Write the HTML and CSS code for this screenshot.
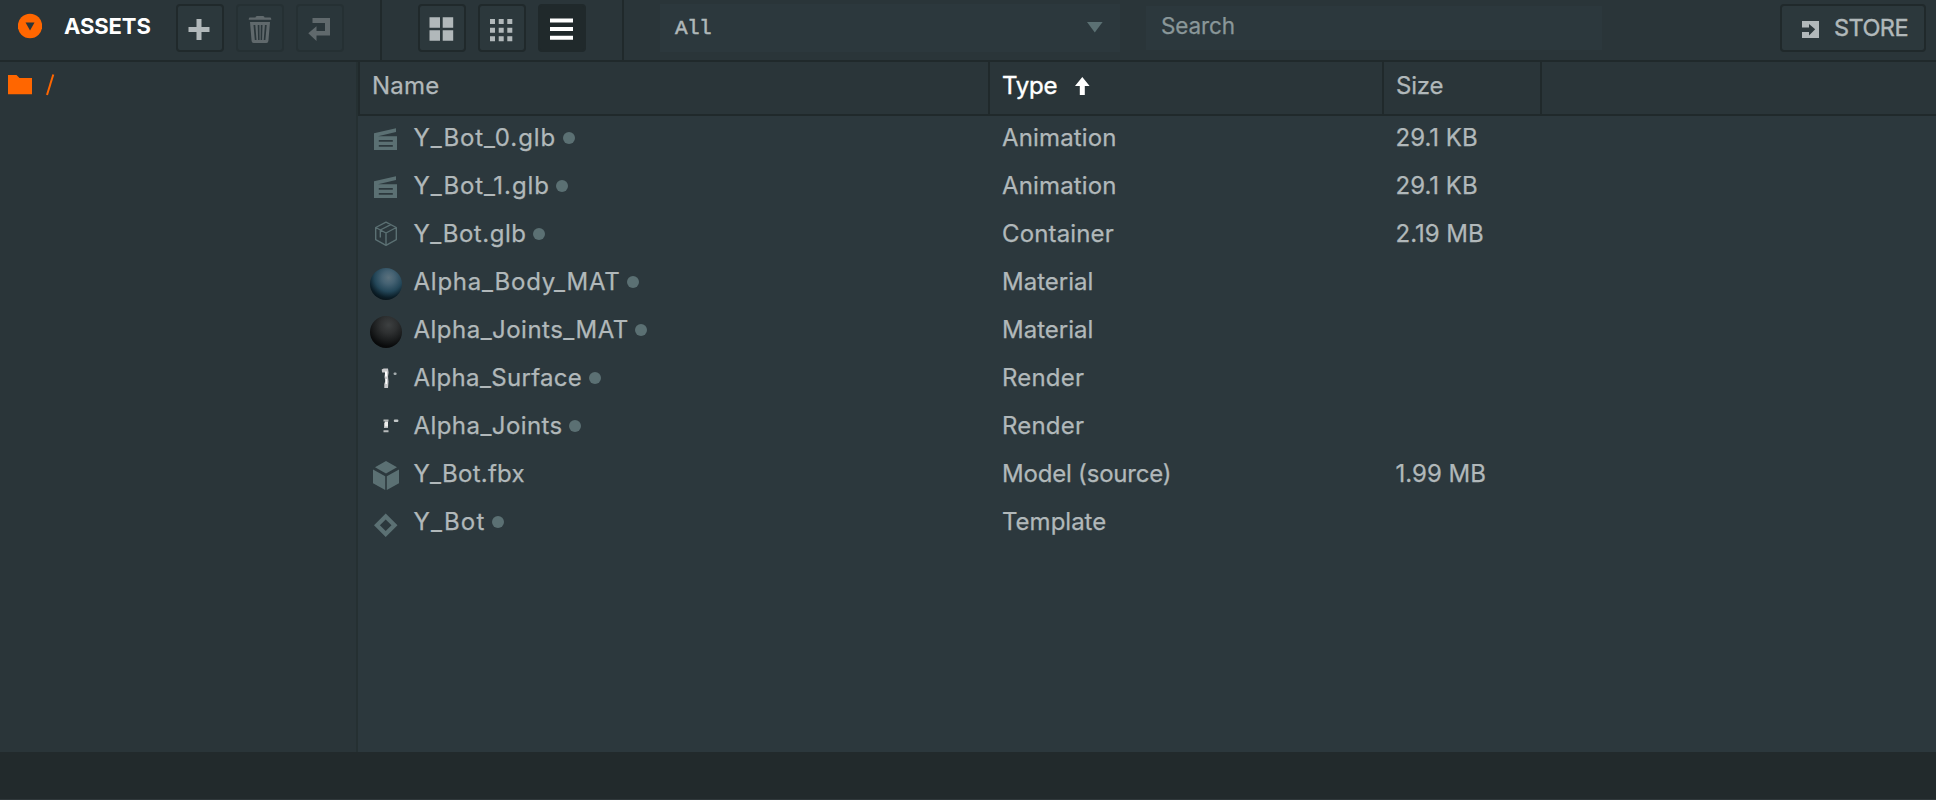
FILE: index.html
```html
<!DOCTYPE html>
<html lang="en">
<head>
<meta charset="utf-8">
<title>Assets</title>
<link rel="stylesheet" href="styles.css">
</head>
<body>
<div class="app">
  <header class="toolbar">
    <div class="tools">
      <svg class="toggle" width="24" height="26" viewBox="0 0 24 26"><circle cx="12" cy="13" r="12.2" fill="#ff6600"/><path d="M7.500 9.600h9L12 17.600z" fill="#2a3539"/></svg>
      <h1 class="title">ASSETS</h1>
      <button class="btn" aria-label="Add"><svg width="44" height="44" viewBox="0 0 44 44"><path d="M18.500 13h5v8h8v5h-8v8h-5v-8h-8v-5h8z" fill="#b1b8ba"/></svg></button>
      <button class="btn disabled" aria-label="Delete"><svg width="44" height="44" viewBox="0 0 44 44" fill="#b1b8ba"><path d="M17.500 11.500q0-1.500 1.500-1.500h6q1.500 0 1.500 1.500h6q.8 1 .8 2.300h-22.600q0-1.300.8-2.300z"/><path fill-rule="evenodd" d="M12 16h20l-1.600 19q-.2 2-2 2H15.600q-1.800 0-2-2zM15.500 19l1.300 15h1.700L17.300 19zM19.700 19l.4 15h1.500l-.2-15zM22.800 19l-.2 15h1.500l.4-15zM26.900 19l-1.200 15h1.700l1.300-15z"/></svg></button>
      <button class="btn disabled" aria-label="Move"><svg width="44" height="44" viewBox="0 0 44 44"><path d="M14.500 12H32v17.500H18.500V35L10.300 27.300l8.200-7V25H27v-8H14.500z" fill="#b1b8ba"/></svg></button>
    </div>
    <div class="views">
      <button class="btn" aria-label="Large grid"><svg width="44" height="44" viewBox="0 0 44 44" fill="#b1b8ba"><path d="M9.500 11.300h10.500v10.500H9.500zM22.700 11.300h10.500v10.500H22.700zM9.500 24.300h10.500v10.500H9.500zM22.700 24.300h10.500v10.500H22.700z"/></svg></button>
      <button class="btn" aria-label="Small grid"><svg width="44" height="44" viewBox="0 0 44 44" fill="#b1b8ba"><path d="M10 13h5v5h-5zM18.700 13h5v5h-5zM27.300 13h5v5h-5zM10 21.700h5v5h-5zM18.700 21.700h5v5h-5zM27.300 21.700h5v5h-5zM10 30.300h5v5h-5zM18.700 30.300h5v5h-5zM27.300 30.300h5v5h-5z"/></svg></button>
      <button class="btn active" aria-label="List"><svg width="44" height="44" viewBox="0 0 44 44" fill="#fff"><path d="M10 12.500h23v4H10zM10 21h23v4H10zM10 29.700h23v4H10z"/></svg></button>
    </div>
    <div class="filters">
      <div class="select"><span>All</span><svg width="16" height="12" viewBox="0 0 16 12"><path d="M0 0h15.600L7.800 10.500z" fill="#5b7073"/></svg></div>
      <div class="search">Search</div>
    </div>
    <button class="btn store"><svg width="17" height="17" viewBox="0 0 17 17"><path fill-rule="evenodd" d="M0 0h17v17H0v-6h7v3.500L13.200 8.300 7 3v3.500H0z" fill="#b1b8ba"/></svg><span>STORE</span></button>
  </header>

  <main class="main">
    <nav class="folders">
      <svg width="24" height="20" viewBox="0 0 24 20"><path d="M0 0h8.500l3 3H24v16.300H0z" fill="#ff6600"/></svg>
      <svg class="root" width="9" height="22" viewBox="0 0 9 22"><path d="M1 21L7.300 0.500" stroke="#ff6600" stroke-width="2"/></svg>
    </nav>
    <section class="table">
      <div class="row head">
        <div class="cell n-name">Name</div>
        <div class="cell n-type sorted"><span>Type</span><svg width="15" height="19" viewBox="0 0 15 19"><path d="M7.300 0L14.600 9H9.800v9H4.800V9H0z" fill="#fff"/></svg></div>
        <div class="cell n-size">Size</div>
      </div>
      <div class="list">
        <div class="row"><div class="icon"><svg width="32" height="32"><use href="#clip"/></svg></div><div class="name t1">Y_Bot_0.glb</div><div class="type w1">Animation</div><div class="size">29.1 KB</div></div>
        <div class="row"><div class="icon"><svg width="32" height="32"><use href="#clip"/></svg></div><div class="name t2">Y_Bot_1.glb</div><div class="type w1">Animation</div><div class="size">29.1 KB</div></div>
        <div class="row"><div class="icon"><svg width="32" height="32" viewBox="0 0 32 32"><path d="M16 2.200l10.300 5.300v12.200L16 25.300 5.700 19.700V7.500zM5.700 7.500L16 13l10.300-5.500M16 13v12.300M10.300 17.500V10L20.800 4.700" fill="none" stroke="#5b7073" stroke-width="1.400" stroke-linejoin="round"/></svg></div><div class="name t3">Y_Bot.glb</div><div class="type w1">Container</div><div class="size">2.19 MB</div></div>
        <div class="row"><div class="icon"><div class="ball blue"></div></div><div class="name t4">Alpha_Body_MAT</div><div class="type w2">Material</div></div>
        <div class="row"><div class="icon"><div class="ball black"></div></div><div class="name t5">Alpha_Joints_MAT</div><div class="type w2">Material</div></div>
        <div class="row"><div class="icon"><svg width="32" height="32" viewBox="0 0 32 32"><path d="M11.700 5.500l2-1h4.300l.6 4-.6 4 .5 5-.5 6.500h-3.700v-4l1-3-.8-4 .6-4.500h-3z" fill="#c9c9cb"/><path d="M15 7.500h2v5h-2zM15.500 15h1.500v5h-1.500z" fill="#fff"/><rect x="23.700" y="8.500" width="2.800" height="2.600" rx=".8" fill="#a4abad"/></svg></div><div class="name t6">Alpha_Surface</div><div class="type w3">Render</div></div>
        <div class="row"><div class="icon"><svg width="32" height="32" viewBox="0 0 32 32"><path d="M13.500 7.500h5v2h-5zM14 10.500h4v5.500h-4zM13.500 18.300h5v2h-5z" fill="#b8bbbc"/><path d="M15 9.500h3v5h-3z" fill="#eee"/><rect x="23.800" y="7.500" width="4.600" height="2.400" rx="1" fill="#c4c8c9"/></svg></div><div class="name t7">Alpha_Joints</div><div class="type w3">Render</div></div>
        <div class="row"><div class="icon"><svg width="32" height="32" viewBox="0 0 32 32" fill="#5b7073"><path d="M16 1L27 7.200 16 13.400 5 7.200zM3 9.500l12.200 6.800V30L3 23.200zM29 9.500l-12.200 6.800V30L29 23.200z"/></svg></div><div class="name t8 plain">Y_Bot.fbx</div><div class="type w4">Model (source)</div><div class="size">1.99 MB</div></div>
        <div class="row"><div class="icon"><svg width="32" height="32" viewBox="0 0 32 32"><path fill-rule="evenodd" d="M15.700 5.500L27.500 17.300 15.700 29 4 17.300zM15.700 11.400L9.900 17.300l5.800 5.800 5.800-5.800z" fill="#5b7073"/></svg></div><div class="name t9">Y_Bot</div><div class="type">Template</div></div>
      </div>
    </section>
  </main>
  <footer class="status"></footer>
</div>
<svg class="defs" width="0" height="0"><symbol id="clip" viewBox="0 0 32 32"><path fill-rule="evenodd" d="M4 9.200L26 4.300v3.700L8 12.200h19V26H4zM8.800 16v1.800h14V16zM8.800 21v1.800h14V21z" fill="#5b7073"/></symbol></svg>
</body>
</html>
```
FILE: styles.css
```css
* { box-sizing: border-box; }
body { margin: 0; background: #222a2c; color: #b1b8ba; font: 400 24px/30px Inter, "Liberation Sans", sans-serif; -webkit-text-stroke: 0.25px currentColor; }
svg { display: block; flex: none; }
.defs { display: none; }
.app { display: flex; flex-direction: column; width: 1936px; height: 800px; overflow: hidden; }

.toolbar { display: flex; height: 62px; flex: none; background: #2a3539; border-bottom: 2px solid #20292b; padding-right: 10px; }
.tools { display: flex; width: 382px; border-right: 2px solid #20292b; padding: 4px 0 0 18px; }
.toggle { margin-top: 9px; }
.title { width: 134px; margin: 7px 0 0; padding-left: 22px; font-size: 22px; line-height: 30px; font-weight: 700; letter-spacing: -0.1px; color: #fff; -webkit-text-stroke: 0; }
.btn { display: flex; width: 48px; height: 48px; flex: none; padding: 0; border: 2px solid #20292b; border-radius: 4px; background: #2c383c; color: #b1b8ba; font: inherit; }
.tools .btn + .btn, .views .btn + .btn { margin-left: 12px; }
.disabled { opacity: 0.4; }
.active { background: #20292b; }
.views { display: flex; width: 242px; border-right: 2px solid #20292b; padding: 4px 0 0 36px; }
.filters { display: flex; flex: 1; padding-left: 36px; }
.select { display: flex; justify-content: space-between; width: 460px; height: 48px; margin-top: 4px; padding: 10px 17px 0 15px; background: #2c383d; font: 20px/30px "Liberation Mono", monospace; -webkit-text-stroke: 0.5px #b1b8ba; }
.select span { font-size: 21px; letter-spacing: -0.6px; }
.select svg { margin-top: 8px; }
.search { width: 456px; height: 44px; margin: 6px 0 0 26px; padding: 5px 0 0 15px; background: #2c383d; color: #8a9799; font-size: 22.500px; letter-spacing: -0.1px; }
.store { width: 146px; margin-top: 4px; padding: 7px 0 0 20px; }
.store svg { margin-top: 8px; }
.store span { margin-left: 15px; font-size: 23.500px; letter-spacing: -0.55px; -webkit-text-stroke: 0.4px #b1b8ba; }

.main { display: flex; height: 690px; flex: none; }
.folders { display: flex; width: 358px; padding: 13px 0 0 8px; background: #2a3539; border-right: 2px solid #253032; }
.root { margin: -1px 0 0 14px; }
.table { display: flex; flex-direction: column; flex: 1; background: #2c383d; }
.row { display: flex; height: 48px; }
.head { height: 54px; flex: none; background: #2a3539; border-bottom: 2px solid #20292b; border-left: 2px solid #20292b; }
.cell { padding: 9px 0 0 12px; border-right: 2px solid #20292b; }
.n-name { width: 630px; letter-spacing: 0.2px; }
.n-type { display: flex; width: 394px; color: #fff; letter-spacing: -0.2px; -webkit-text-stroke: 0.4px #fff; }
.n-type svg { margin: 6px 0 0 18px; }
.n-size { width: 158px; letter-spacing: -0.2px; }
.icon { display: flex; align-items: center; width: 55.500px; padding-left: 12px; }
.name, .type, .size { padding-top: 7px; white-space: nowrap; }
.name { display: flex; width: 588.500px; }
.name::after { content: ""; width: 12px; height: 12px; margin: 9px 0 0 6.500px; border-radius: 50%; background: #5b7073; }
.plain::after { display: none; }
.type { width: 393.500px; }
.t1 { letter-spacing: 0.92px; }
.t2 { letter-spacing: 0.92px; }
.t3 { letter-spacing: 0.55px; }
.t4 { letter-spacing: 0.76px; }
.t5 { letter-spacing: 0.48px; }
.t6 { letter-spacing: 0.33px; }
.t7 { letter-spacing: 0.43px; }
.t8 { letter-spacing: 0.25px; }
.t9 { letter-spacing: 1.2px; }
.w1 { letter-spacing: 0.15px; }
.w2 { letter-spacing: 0; }
.w3 { letter-spacing: 0.2px; }
.w4 { letter-spacing: -0.2px; }
.ball { width: 32px; height: 32px; border-radius: 50%; }
.blue { background: radial-gradient(circle at 58% 30%, #5b717d 0%, #456273 22%, #234658 48%, #0c1f29 68%, #030608 90%); }
.black { background: radial-gradient(circle at 58% 28%, #3d4041 0%, #2e3031 28%, #1b1d1e 52%, #0a0b0c 72%, #030404 95%); }

.status { flex: 1; background: #222a2c; border-bottom: 1px solid #30383b; }
```
